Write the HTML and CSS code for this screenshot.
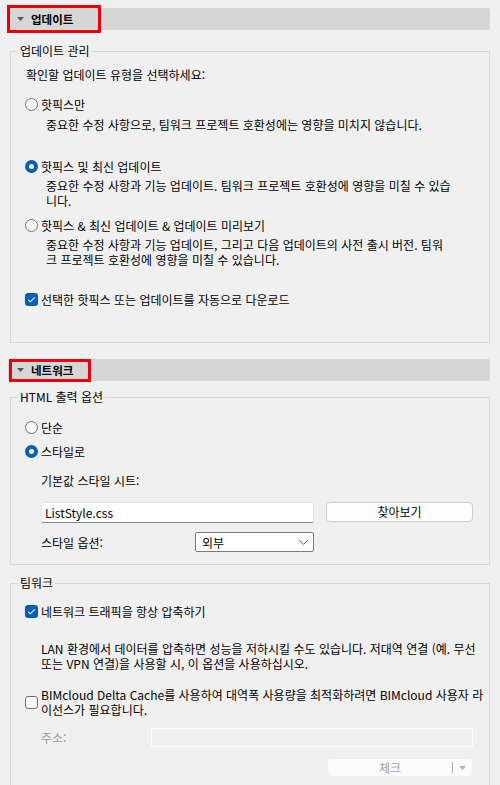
FILE: index.html
```html
<!DOCTYPE html>
<html lang="ko">
<head>
<meta charset="utf-8">
<link rel="stylesheet" href="styles.css">
</head>
<body>
<div class="page">
  <div class="head">
    <svg class="tri" width="7" height="4" viewBox="0 0 7 4"><path d="M0 0H7L3.5 4Z" fill="#5a5a5a"/></svg>
    <span class="head-title">업데이트</span>
    <span class="mark mark1"></span>
  </div>

  <fieldset class="group g1">
    <legend>업데이트 관리</legend>
    <div class="inner">
      <div class="intro">확인할 업데이트 유형을 선택하세요:</div>
      <div class="row opt1"><span class="radio"></span><span class="lbl">핫픽스만</span></div>
      <div class="desc d1">중요한 수정 사항으로, 팀워크 프로젝트 호환성에는 영향을 미치지 않습니다.</div>
      <div class="row opt2"><span class="radio on"></span><span class="lbl">핫픽스 및 최신 업데이트</span></div>
      <div class="desc d2">중요한 수정 사항과 기능 업데이트. 팀워크 프로젝트 호환성에 영향을 미칠 수 있습<br>니다.</div>
      <div class="row opt3"><span class="radio"></span><span class="lbl">핫픽스 &amp; 최신 업데이트 &amp; 업데이트 미리보기</span></div>
      <div class="desc d3">중요한 수정 사항과 기능 업데이트, 그리고 다음 업데이트의 사전 출시 버전. 팀워<br>크 프로젝트 호환성에 영향을 미칠 수 있습니다.</div>
      <div class="row chk1"><span class="check on"><svg width="13" height="13" viewBox="0 0 13 13"><path d="M3.3 6.8L5.4 8.8L9.8 4.4" fill="none" stroke="#fff" stroke-width="1.1"/></svg></span><span class="lbl">선택한 핫픽스 또는 업데이트를 자동으로 다운로드</span></div>
    </div>
  </fieldset>

  <div class="head head2">
    <svg class="tri" width="7" height="4" viewBox="0 0 7 4"><path d="M0 0H7L3.5 4Z" fill="#5a5a5a"/></svg>
    <span class="head-title">네트워크</span>
    <span class="mark mark2"></span>
  </div>

  <fieldset class="group g2">
    <legend>HTML 출력 옵션</legend>
    <div class="inner">
      <div class="row r-simple"><span class="radio"></span><span class="lbl">단순</span></div>
      <div class="row r-style"><span class="radio on"></span><span class="lbl">스타일로</span></div>
      <div class="sub sheet-lbl">기본값 스타일 시트:</div>
      <div class="sub file-row">
        <div class="textbox">ListStyle.css</div>
        <div class="btn">찾아보기</div>
      </div>
      <div class="sub opt-row">
        <span class="opt-lbl">스타일 옵션:</span>
        <div class="select"><span>외부</span><svg width="9" height="5" viewBox="0 0 9 5"><path d="M0.5 0.5L4.5 4.3L8.5 0.5" fill="none" stroke="#5c5c5c" stroke-width="1"/></svg></div>
      </div>
    </div>
  </fieldset>

  <fieldset class="group g3">
    <legend>팀워크</legend>
    <div class="inner">
      <div class="row chk2"><span class="check on"><svg width="13" height="13" viewBox="0 0 13 13"><path d="M3.3 6.8L5.4 8.8L9.8 4.4" fill="none" stroke="#fff" stroke-width="1.1"/></svg></span><span class="lbl">네트워크 트래픽을 항상 압축하기</span></div>
      <div class="sub lan">LAN 환경에서 데이터를 압축하면 성능을 저하시킬 수도 있습니다. 저대역 연결 (예. 무선<br>또는 VPN 연결)을 사용할 시, 이 옵션을 사용하십시오.</div>
      <div class="row chk3"><span class="check"></span><span class="lbl">BIMcloud Delta Cache를 사용하여 대역폭 사용량을 최적화하려면 BIMcloud 사용자 라<br>이선스가 필요합니다.</span></div>
      <div class="sub addr-row">
        <span class="addr-lbl">주소:</span>
        <div class="addr-box"></div>
      </div>
      <div class="split">
        <span class="split-main">체크</span>
        <span class="split-sep"></span>
        <svg class="split-arrow" width="7" height="4" viewBox="0 0 7 4"><path d="M0 0H7L3.5 4Z" fill="#b4b4b4"/></svg>
      </div>
    </div>
  </fieldset>
</div>
</body>
</html>
```

FILE: styles.css
```css
html, body {
  margin: 0;
  padding: 0;
}
body {
  background: #f0f0f0;
  font-family: "Noto Sans CJK KR", "Noto Sans", sans-serif;
  font-size: 12px;
  line-height: 15px;
  color: #000;
  width: 500px;
  height: 785px;
  overflow: hidden;
}
.page {
  padding-top: 8px;
}
.head {
  position: relative;
  margin: 0 10px 0 8px;
  height: 22px;
  background: #d6d6d6;
  border-radius: 2px;
  display: flex;
  align-items: center;
  padding-left: 9px;
}
.head2 {
  margin-top: 16px;
}
.tri {
  display: block;
  margin-right: 7px;
}
.head-title {
  font-weight: bold;
  font-size: 11.5px;
}
.mark {
  position: absolute;
  border: 3px solid #e8000b;
  box-sizing: border-box;
}
.mark1 {
  left: -1px;
  top: -3px;
  width: 94px;
  height: 28px;
}
.mark2 {
  left: 1px;
  top: 0;
  width: 82px;
  height: 23px;
}
.group {
  margin: 13px 10px 0 10px;
  padding: 0;
  border: 1px solid #d9d9d9;
  min-width: 0;
}
.group legend {
  margin-left: 7px;
  padding: 0 2px;
  line-height: 16px;
}
.g2 {
  margin-top: 8px;
}
.g3 {
  margin-top: 10px;
  height: 400px;
}
.inner {
  padding-left: 14px;
}
.g1 .inner {
  padding-bottom: 35px;
}
.g2 .inner {
  padding-bottom: 12px;
}
.intro {
  margin-top: 8px;
  padding-left: 1px;
}
.row {
  display: flex;
  align-items: center;
}
.lbl {
  margin-left: 3px;
  white-space: nowrap;
}
.radio {
  flex: none;
  width: 13px;
  height: 13px;
  box-sizing: border-box;
  border: 1px solid #707070;
  border-radius: 50%;
  background: #f9f9f9;
  position: relative;
}
.radio.on {
  border: none;
  background: #005fb8;
}
.radio.on::after {
  content: "";
  position: absolute;
  left: 4px;
  top: 4px;
  width: 5px;
  height: 5px;
  border-radius: 50%;
  background: #fff;
}
.check {
  flex: none;
  width: 13px;
  height: 13px;
  box-sizing: border-box;
  border: 1px solid #707070;
  border-radius: 3px;
  background: #f9f9f9;
  display: block;
}
.check.on {
  border: none;
  background: #005fb8;
}
.check svg {
  display: block;
}
.desc {
  padding-left: 21px;
  white-space: nowrap;
}
.opt1 { margin-top: 15px; }
.d1 { margin-top: 5px; }
.opt2 { margin-top: 27px; }
.d2 { margin-top: 4px; }
.opt3 { margin-top: 10px; }
.d3 { margin-top: 4px; }
.chk1 { margin-top: 25px; }

.r-simple { margin-top: 15px; }
.r-style { margin-top: 9px; }
.sub {
  padding-left: 16px;
}
.sheet-lbl { margin-top: 14px; }
.file-row {
  margin-top: 14px;
  display: flex;
  align-items: flex-start;
}
.textbox {
  width: 273px;
  height: 21px;
  box-sizing: border-box;
  background: #fff;
  border: 1px solid #e5e5e5;
  border-bottom-color: #878787;
  border-radius: 2px;
  padding-left: 3px;
  line-height: 19px;
}
.btn {
  margin-left: 12px;
  width: 147px;
  height: 20px;
  box-sizing: border-box;
  background: #fdfdfd;
  border: 1px solid #d0d0d0;
  border-radius: 4px;
  text-align: center;
  line-height: 18px;
}
.opt-row {
  margin-top: 9px;
  display: flex;
  align-items: center;
}
.opt-lbl {
  width: 154px;
}
.select {
  width: 119px;
  height: 20px;
  box-sizing: border-box;
  background: #fff;
  border: 1px solid #7a7a7a;
  border-radius: 2px;
  display: flex;
  align-items: center;
  justify-content: space-between;
  padding: 0 5px 0 6px;
}
.select svg {
  display: block;
}

.chk2 { margin-top: 13px; }
.lan {
  margin-top: 22px;
  white-space: nowrap;
}
.chk3 { margin-top: 16px; }
.addr-row {
  margin-top: 11px;
  display: flex;
  align-items: center;
}
.addr-lbl {
  width: 110px;
  color: #9d9d9d;
}
.addr-box {
  width: 322px;
  height: 19px;
  box-sizing: border-box;
  border: 1px solid #fbfbfb;
  background: #f0f0f0;
}
.split {
  margin-top: 11px;
  margin-left: 302px;
  width: 146px;
  height: 19px;
  box-sizing: border-box;
  background: #fbfbfb;
  border: 1px solid #ededed;
  border-radius: 4px;
  display: flex;
  align-items: center;
  color: #a0a0a0;
}
.split-main {
  width: 124px;
  text-align: center;
}
.split-sep {
  width: 1px;
  height: 11px;
  background: #a8a8a8;
}
.split-arrow {
  display: block;
  margin-left: 6px;
}
```
